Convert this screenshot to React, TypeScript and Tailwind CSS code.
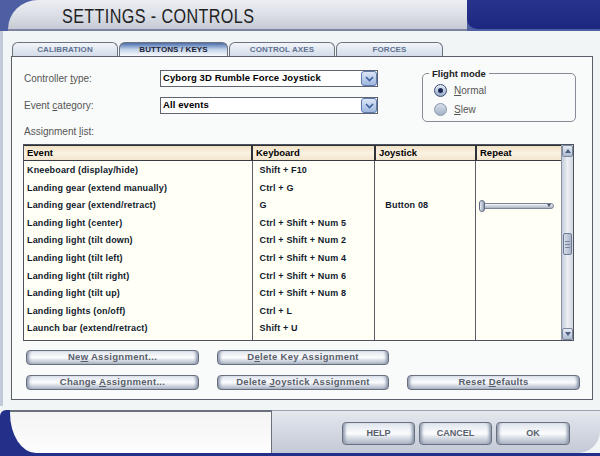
import cn from "clsx";

const FONT = "font-['Liberation_Sans',Arial,sans-serif]";

type Row = { event: string; key: string; joy?: string; repeat?: boolean };

const rows: Row[] = [
  { event: "Kneeboard (display/hide)", key: "Shift + F10" },
  { event: "Landing gear (extend manually)", key: "Ctrl + G" },
  { event: "Landing gear (extend/retract)", key: "G", joy: "Button 08", repeat: true },
  { event: "Landing light (center)", key: "Ctrl + Shift + Num 5" },
  { event: "Landing light (tilt down)", key: "Ctrl + Shift + Num 2" },
  { event: "Landing light (tilt left)", key: "Ctrl + Shift + Num 4" },
  { event: "Landing light (tilt right)", key: "Ctrl + Shift + Num 6" },
  { event: "Landing light (tilt up)", key: "Ctrl + Shift + Num 8" },
  { event: "Landing lights (on/off)", key: "Ctrl + L" },
  { event: "Launch bar (extend/retract)", key: "Shift + U" },
];

const tabs = [
  { label: "CALIBRATION", w: "w-[106px]" },
  { label: "BUTTONS / KEYS", w: "w-[109px]", active: true },
  { label: "CONTROL AXES", w: "w-[106px]" },
  { label: "FORCES", w: "w-[107px]" },
];

// underlined mnemonic letter
const U = ({ children }: { children: string }) => <span className="underline underline-offset-[1px]">{children}</span>;

const Btn = ({ children, className }: { children: React.ReactNode; className?: string }) => (
  <div
    className={cn(
      "flex items-center justify-center rounded-[4px] border border-[#69707e] bg-gradient-to-b from-[#dfe5ee] via-[#fbfcfd] to-[#aab4c4] font-bold text-[#585e6a] shadow-[inset_4px_0_3px_-2px_#8d98ad,inset_-4px_0_3px_-2px_#8d98ad]",
      className
    )}
  >
    <span>{children}</span>
  </div>
);

const Select = ({ value }: { value: string }) => (
  <div className="w-[218px] h-[17px] flex items-center border border-[#5f6470] bg-white pl-[2px]">
    <span className="flex-1 text-[9.5px] font-bold text-black tracking-[0.1px]">{value}</span>
    <div className="w-[16px] h-[15px] rounded-[3px] border border-[#5c7bb0] bg-gradient-to-b from-[#dbe6f7] to-[#9fb7de] flex items-center justify-center">
      <svg width="9" height="6" viewBox="0 0 9 6">
        <path d="M1 1 L4.5 4.5 L8 1" fill="none" stroke="#3d5f9c" strokeWidth="1.6" />
      </svg>
    </div>
  </div>
);

const Radio = ({ checked, children }: { checked?: boolean; children: React.ReactNode }) => (
  <div className="flex items-center gap-[7px] h-[15px]">
    <div
      className={cn(
        "w-[13px] h-[13px] rounded-full border flex items-center justify-center",
        checked
          ? "border-[#3d4e73] bg-gradient-to-b from-[#e6edf7] to-[#97a9c6]"
          : "border-[#8796ad] bg-gradient-to-b from-[#d6dee9] to-[#a4b2c6]"
      )}
    >
      {checked && <div className="w-[5px] h-[5px] rounded-full bg-[#1b2a52]" />}
    </div>
    <span className="text-[10px] text-[#555]">{children}</span>
  </div>
);

export default function App() {
  return (
    <div className={cn("w-[600px] h-[456px] overflow-hidden flex flex-col bg-[#f2f5f6]", FONT)}>
      {/* Title bar */}
      <div className="h-[31px] flex bg-[#4d5ea3] shrink-0">
        <div className="w-[8px]" />
        <div className="flex-1 rounded-tl-[30px_29px] bg-gradient-to-b from-[#eceef3] via-[#dcdfe6] to-[#c6cad4] border-b-2 border-[#7c84a0] pl-[54px] flex items-center">
          <span className="inline-block origin-left scale-x-[0.77] text-[21px] leading-none text-[#1f1f24] tracking-[0.5px] pt-[1px]">
            SETTINGS - CONTROLS
          </span>
        </div>
        <div className="w-[133px] bg-gradient-to-b from-[#27338c] to-[#1c2780] rounded-bl-[10px] mb-[2px]" />
      </div>

      {/* Body */}
      <div className="flex-1 flex flex-col border-l-[3px] border-[#c2cada] pl-[8px] pr-[7px] pt-[11px]">
        {/* Tabs */}
        <div className="flex gap-px ml-[1px] h-[14px]">
          {tabs.map((t) => (
            <div
              key={t.label}
              className={cn(
                "h-[14px] rounded-t-[6px] border border-b-0 border-[#6d7280] flex items-center justify-center text-[8px] font-bold tracking-[0.1px]",
                t.w,
                t.active
                  ? "bg-gradient-to-b from-[#4d6eab] via-[#c5d4ea] to-[#f7f9fc] text-[#1c2436] border-[#3b4f7a]"
                  : "bg-gradient-to-b from-[#f2f5f9] to-[#d3dce9] text-[#5d7190]"
              )}
            >
              {t.label}
            </div>
          ))}
        </div>

        {/* Panel */}
        <div className="w-[582px] h-[344px] border border-[#5a5e66] bg-[#f9fbfa] pt-[13px] flex flex-col">
          <div className="flex h-[74px]">
            <div className="flex flex-col pl-[12px]">
              <div className="flex items-center h-[17px]">
                <span className="w-[136px] text-[10px] text-[#555]">
                  Controller <U>t</U>ype:
                </span>
                <Select value="Cyborg 3D Rumble Force Joystick" />
              </div>
              <div className="flex items-center h-[17px] mt-[10px]">
                <span className="w-[136px] text-[10px] text-[#555]">
                  Event <U>c</U>ategory:
                </span>
                <Select value="All events" />
              </div>
              <div className="mt-[11px] h-[12px] flex items-center text-[10px] text-[#555]">
                <span>
                  Assignment <U>l</U>ist:
                </span>
              </div>
            </div>
            <div className="relative ml-[44px] mt-[3px] w-[154px] h-[49px] rounded-[5px] border border-[#878b94] pl-[11px] pt-[9px] flex flex-col gap-[4px]">
              <span className="absolute -top-[7px] left-[6px] bg-[#f9fbfa] px-[3px] text-[9.5px] font-bold text-[#222]">
                Flight mode
              </span>
              <Radio checked>
                <U>N</U>ormal
              </Radio>
              <Radio>
                <U>S</U>lew
              </Radio>
            </div>
          </div>

          {/* Assignment table */}
          <div className="ml-[11px] w-[551px] h-[197px] border border-[#4e525c] flex flex-col">
            <div className="grid grid-cols-[229px_123px_101px_85px_11px] h-[16px] border-t border-[#2e3038]">
              {["Event", "Keyboard", "Joystick", "Repeat"].map((h, i) => (
                <div
                  key={h}
                  className={cn(
                    "flex items-center pl-[3px] text-[9.5px] font-bold text-black border-b-2 border-[#3a3c44] bg-gradient-to-b from-[#efe1c6] via-[#fbf2e2] to-[#f3e6cf]",
                    i < 3 && "border-r-2 border-r-[#2f3139]"
                  )}
                >
                  {h}
                </div>
              ))}
              <div />
            </div>
            <div className="flex-1 flex bg-[#fffff6]">
              <div className="w-[229px] border-r border-[#5b5e68] pt-[1px]">
                {rows.map((r) => (
                  <div key={r.event} className="h-[17.6px] flex items-center pl-[3px] text-[9px] font-bold text-[#111a2c] tracking-[0.15px]">
                    {r.event}
                  </div>
                ))}
              </div>
              <div className="w-[123px] border-r border-[#5b5e68] pt-[1px]">
                {rows.map((r) => (
                  <div key={r.event} className="h-[17.6px] flex items-center pl-[7px] text-[9px] font-bold text-[#111a2c] tracking-[0.15px]">
                    {r.key}
                  </div>
                ))}
              </div>
              <div className="w-[101px] border-r border-[#5b5e68] pt-[1px]">
                {rows.map((r) => (
                  <div key={r.event} className="h-[17.6px] flex items-center pl-[10px] text-[9px] font-bold text-[#111a2c] tracking-[0.15px]">
                    {r.joy}
                  </div>
                ))}
              </div>
              <div className="w-[85px] pt-[1px]">
                {rows.map((r) => (
                  <div key={r.event} className="h-[17.6px] flex items-center pl-[3px]">
                    {r.repeat && (
                      <div className="relative w-[75px] h-[6px] rounded-full border border-[#7d8696] bg-gradient-to-b from-[#f4f6f9] to-[#aab3c1]">
                        <div className="absolute -left-px -top-[4px] w-[6px] h-[12px] rounded-[3px] border border-[#5f6b80] bg-gradient-to-r from-[#e9eef5] to-[#8e9cb3]" />
                        <div className="absolute right-[2px] top-[0px] w-0 h-0 border-l-[2px] border-r-[2px] border-t-[3px] border-l-transparent border-r-transparent border-t-[#4c5870]" />
                      </div>
                    )}
                  </div>
                ))}
              </div>
              {/* Scrollbar */}
              <div className="w-[12px] -mt-[16px] flex flex-col border-l border-[#8a93a4] bg-gradient-to-r from-[#c5cdda] via-[#eceff4] to-[#d1d7e2]">
                <div className="h-[12px] border border-[#7b879e] rounded-[2px] bg-gradient-to-b from-[#e7ecf4] to-[#aebbd0] flex items-center justify-center">
                  <div className="w-0 h-0 border-l-[3px] border-r-[3px] border-b-[4px] border-l-transparent border-r-transparent border-b-[#4d5f82]" />
                </div>
                <div className="h-[76px]" />
                <div className="h-[22px] mx-[1px] border border-[#6e7a92] rounded-[2px] bg-gradient-to-r from-[#d6dde9] to-[#a9b6ca] flex flex-col items-center justify-center gap-[2px]">
                  <div className="w-[5px] h-px bg-[#7b879c]" />
                  <div className="w-[5px] h-px bg-[#7b879c]" />
                  <div className="w-[5px] h-px bg-[#7b879c]" />
                </div>
                <div className="flex-1" />
                <div className="h-[12px] border border-[#7b879e] rounded-[2px] bg-gradient-to-b from-[#e7ecf4] to-[#aebbd0] flex items-center justify-center">
                  <div className="w-0 h-0 border-l-[3px] border-r-[3px] border-t-[4px] border-l-transparent border-r-transparent border-t-[#4d5f82]" />
                </div>
              </div>
            </div>
          </div>

          {/* Action buttons */}
          <div className="ml-[14px] mt-[9px] grid grid-cols-[173px_172px_173px] gap-x-[18px] gap-y-[10px] text-[9.5px]">
            <Btn className="h-[15px] tracking-[0.3px]">
              Ne<U>w</U> Assignment...
            </Btn>
            <Btn className="h-[15px] tracking-[0.3px]">
              D<U>e</U>lete Key Assignment
            </Btn>
            <div />
            <Btn className="h-[15px] tracking-[0.3px]">
              Change <U>A</U>ssignment...
            </Btn>
            <Btn className="h-[15px] tracking-[0.3px]">
              Delete <U>J</U>oystick Assignment
            </Btn>
            <Btn className="h-[15px] tracking-[0.3px]">
              Reset <U>D</U>efaults
            </Btn>
          </div>
        </div>
      </div>

      {/* Bottom bar */}
      <div className="h-[50px] shrink-0 flex bg-[#23308a] pb-[3px]">
        <div className="w-[272px] flex bg-[#f2f5f6]">
          <div className="flex-1 mt-[4px] flex bg-[#23308a] rounded-tl-[6px]">
            <div className="flex-1 ml-[10px] rounded-bl-[26px_40px] border-t-2 border-r border-[#6a6f7c] bg-gradient-to-b from-[#f4f4f4] to-[#fdfdfd]" />
          </div>
        </div>
        <div className="flex-1 flex bg-[#f2f5f6]">
          <div className="flex-1 mt-[4px] rounded-br-[22px] bg-gradient-to-b from-[#e4e8ee] via-[#d3d8e2] to-[#c3c9d6] border-t border-[#9aa1b0] flex items-center justify-end pr-[30px] gap-[4px] pt-[3px]">
            <Btn className="w-[73px] h-[23px] text-[9px]">HELP</Btn>
            <Btn className="w-[73px] h-[23px] text-[9px]">CANCEL</Btn>
            <Btn className="w-[74px] h-[23px] text-[9px] from-[#d7e0ef] via-[#f3f6fb] to-[#a6b5d0]">OK</Btn>
          </div>
        </div>
      </div>
    </div>
  );
}
